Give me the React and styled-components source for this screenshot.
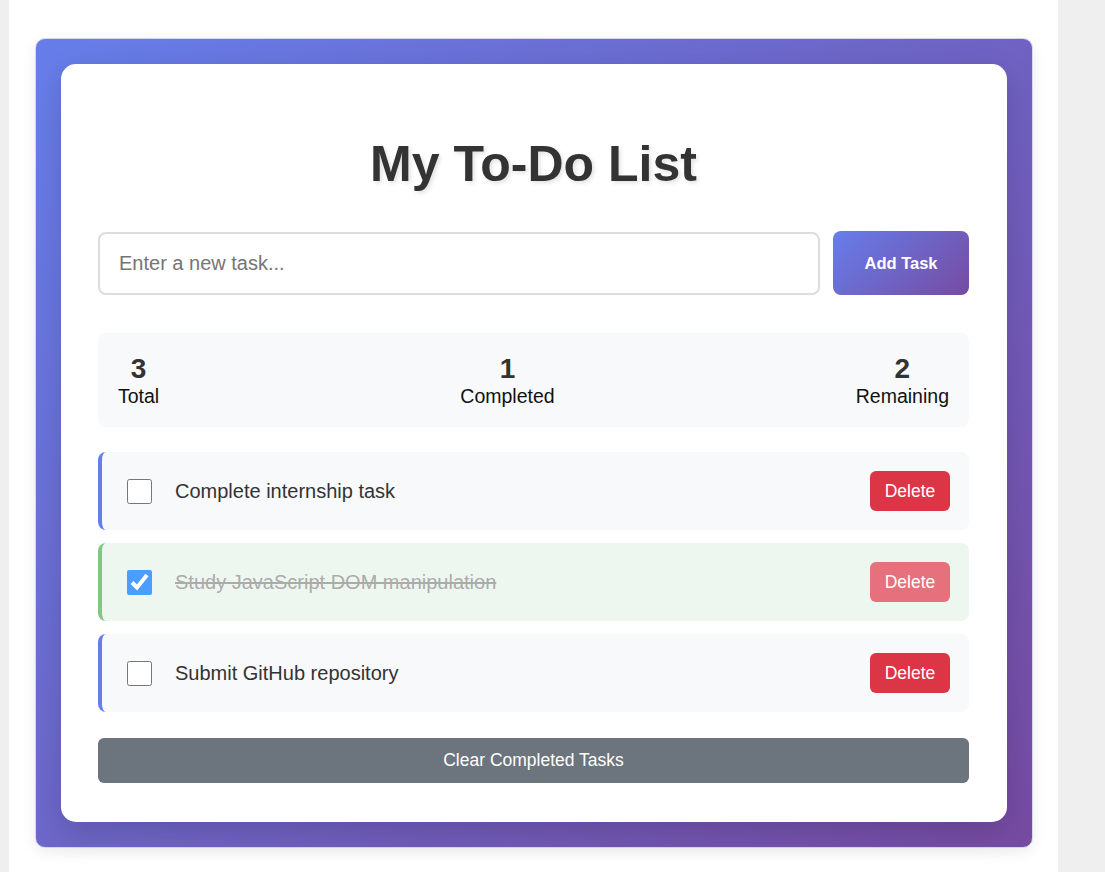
import React, { useState } from 'react'
import styled, { createGlobalStyle } from 'styled-components'

const GlobalStyle = createGlobalStyle`
  * { box-sizing: border-box; }
  body {
    margin: 0;
    background: #efefef;
    font-family: "Liberation Sans", Arial, sans-serif;
  }
`

const Page = styled.div`
  margin-left: 9px;
  width: 1049px;
  min-height: 100vh;
  background: #fff;
  padding: 38px 25px 30px 26px;
`

const Frame = styled.div`
  border: 1px solid #d9d6ea;
  border-radius: 10px;
  padding: 25px;
  background: linear-gradient(135deg, #667eea 0%, #764ba2 100%);
  box-shadow: 0 4px 14px rgba(0, 0, 0, 0.08);
`

const Card = styled.div`
  background: #fff;
  border-radius: 15px;
  padding: 37px 38px 39px 37px;
  box-shadow: 0 10px 30px rgba(0, 0, 0, 0.15);
`

const Title = styled.h1`
  margin: 34px 0 38px;
  text-align: center;
  font-size: 50px;
  font-weight: 700;
  color: #333;
  text-shadow: 2px 2px 4px rgba(0, 0, 0, 0.12);
`

const InputRow = styled.div`
  display: flex;
  align-items: center;
  gap: 13px;
  margin-bottom: 38px;
`

const TaskInput = styled.input`
  flex: 1;
  height: 63px;
  padding: 0 19px;
  border: 2px solid #ddd;
  border-radius: 8px;
  font-family: inherit;
  font-size: 20px;
  color: #333;
  outline: none;
  &::placeholder { color: #757575; }
`

const AddButton = styled.button`
  width: 136px;
  height: 64px;
  border: none;
  border-radius: 8px;
  background: linear-gradient(135deg, #667eea 0%, #764ba2 100%);
  color: #fff;
  font-family: inherit;
  font-size: 16.5px;
  font-weight: 700;
  cursor: pointer;
`

const Stats = styled.div`
  display: flex;
  justify-content: space-between;
  align-items: center;
  background: #f8f9fa;
  border-radius: 8px;
  padding: 20px;
  margin-bottom: 25px;
`

const Stat = styled.div`
  display: flex;
  flex-direction: column;
  align-items: center;
`

const StatNumber = styled.span`
  font-size: 28px;
  font-weight: 700;
  color: #333;
  line-height: 32px;
`

const StatLabel = styled.span`
  font-size: 19.5px;
  color: #111;
  line-height: 22px;
`

const List = styled.ul`
  list-style: none;
  margin: 0 0 26px;
  padding: 0;
  display: flex;
  flex-direction: column;
  gap: 13px;
`

const Item = styled.li`
  display: flex;
  align-items: center;
  padding: 19px 19px 19px 20px;
  border-radius: 8px;
  border-left: 4px solid ${p => (p.$done ? '#4caf50' : '#667eea')};
  background: ${p => (p.$done ? '#e8f5e9' : '#f8f9fa')};
  opacity: ${p => (p.$done ? 0.7 : 1)};
`

const Check = styled.input`
  width: 25px;
  height: 25px;
  margin: 0 0 0 5px;
  cursor: pointer;
`

const TaskText = styled.span`
  flex: 1;
  margin-left: 23px;
  font-size: 20px;
  color: ${p => (p.$done ? '#888' : '#333')};
  text-decoration: ${p => (p.$done ? 'line-through' : 'none')};
`

const DeleteButton = styled.button`
  width: 80px;
  height: 40px;
  border: none;
  border-radius: 6px;
  background: #dc3545;
  color: #fff;
  font-family: inherit;
  font-size: 17.5px;
  cursor: pointer;
`

const ClearButton = styled.button`
  display: block;
  width: 100%;
  height: 45px;
  border: none;
  border-radius: 6px;
  background: #6c757d;
  color: #fff;
  font-family: inherit;
  font-size: 17.5px;
  cursor: pointer;
`

const initialTasks = [
  { id: 1, text: 'Complete internship task', done: false },
  { id: 2, text: 'Study JavaScript DOM manipulation', done: true },
  { id: 3, text: 'Submit GitHub repository', done: false },
]

export default function App() {
  const [tasks, setTasks] = useState(initialTasks)
  const [draft, setDraft] = useState('')

  const completed = tasks.filter(t => t.done).length

  function addTask() {
    if (!draft.trim()) return
    setTasks([...tasks, { id: Date.now(), text: draft.trim(), done: false }])
    setDraft('')
  }

  function toggle(id) {
    setTasks(tasks.map(t => (t.id === id ? { ...t, done: !t.done } : t)))
  }

  function remove(id) {
    setTasks(tasks.filter(t => t.id !== id))
  }

  return (
    <>
      <GlobalStyle />
      <Page>
        <Frame>
          <Card>
            <Title>My To-Do List</Title>
            <InputRow>
              <TaskInput
                placeholder="Enter a new task..."
                value={draft}
                onChange={e => setDraft(e.target.value)}
                onKeyDown={e => e.key === 'Enter' && addTask()}
              />
              <AddButton onClick={addTask}>Add Task</AddButton>
            </InputRow>
            <Stats>
              <Stat>
                <StatNumber>{tasks.length}</StatNumber>
                <StatLabel>Total</StatLabel>
              </Stat>
              <Stat>
                <StatNumber>{completed}</StatNumber>
                <StatLabel>Completed</StatLabel>
              </Stat>
              <Stat>
                <StatNumber>{tasks.length - completed}</StatNumber>
                <StatLabel>Remaining</StatLabel>
              </Stat>
            </Stats>
            <List>
              {tasks.map(task => (
                <Item key={task.id} $done={task.done}>
                  <Check
                    type="checkbox"
                    checked={task.done}
                    onChange={() => toggle(task.id)}
                  />
                  <TaskText $done={task.done}>{task.text}</TaskText>
                  <DeleteButton onClick={() => remove(task.id)}>Delete</DeleteButton>
                </Item>
              ))}
            </List>
            <ClearButton onClick={() => setTasks(tasks.filter(t => !t.done))}>
              Clear Completed Tasks
            </ClearButton>
          </Card>
        </Frame>
      </Page>
    </>
  )
}
